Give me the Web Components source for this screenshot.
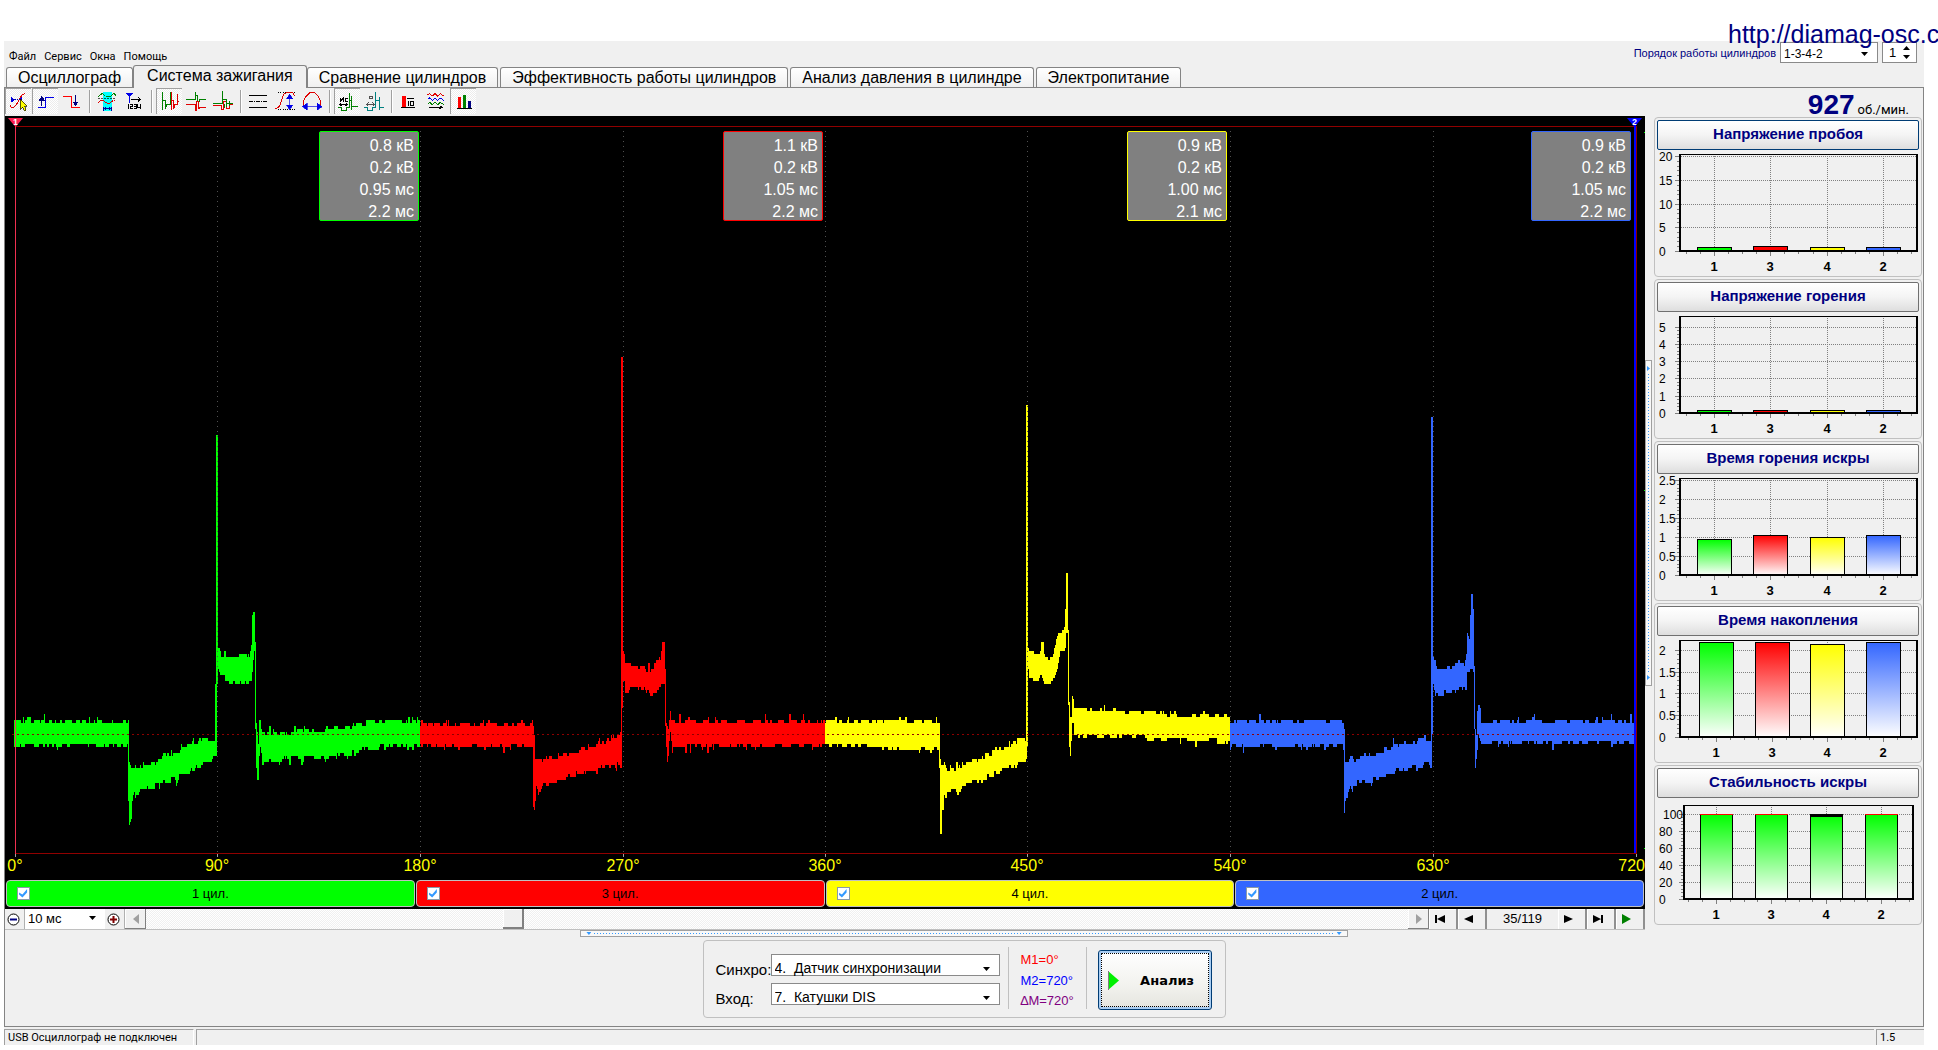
<!DOCTYPE html>
<html lang="ru">
<head>
<meta charset="utf-8">
<title>Diamag</title>
<style>
body{margin:0;background:#fff;font-family:"Liberation Sans",Arial,sans-serif;overflow:hidden}
</style>
</head>
<body>
<osc-app></osc-app>
<script>
const define = (name, css, html, ready) => {
  const tpl = document.createElement('template');
  customElements.define(name, class extends HTMLElement {
    connectedCallback() {
      if (this.shadowRoot) return;
      tpl.innerHTML = `<style>:host,*{box-sizing:border-box}${css}</style>` + (typeof html === 'function' ? html(this) : html);
      this.attachShadow({mode: 'open'}).append(tpl.content.cloneNode(true));
      if (ready) ready(this);
    }
  });
};

/* drop-down list */
define('pick-list', `
  :host{display:grid;grid-template:1fr/1fr;align-items:center;background:#fff;border:1px solid #8a8a8a;font-size:13px}
  select{grid-area:1/1;appearance:none;border:0;background:none;font:inherit;color:#000;padding:0 3px 2px;margin:0;width:100%;height:100%;outline:0}
  svg{grid-area:1/1;justify-self:end;margin:0 9px 2px 0;pointer-events:none}`,
  el => `<select aria-label="${el.getAttribute('label')}"><option>${el.getAttribute('value')}</option></select>
  <svg width="7" height="4"><path d="M0 0H7L3.5 4Z"/></svg>`);

/* menu line with the firing order controls */
define('menu-bar', `
  :host{display:flex;height:24px;justify-content:space-between}
  nav{display:flex;gap:8px;padding:8px 0 0 5px;font:11px/14px Roboto,sans-serif}
  nav button{all:unset}
  .order{display:flex;align-items:flex-start;gap:4px;padding:1px 7px 0 0;font:11px/22px "Liberation Sans",sans-serif;color:#000080}
  pick-list{width:98px;height:21px;font-size:12px}
  .spin{display:flex;align-items:center;width:35px;height:21px;background:#fff;border:1px solid #8a8a8a;padding-right:6px}
  input{all:unset;flex:1;min-width:0;padding-left:6px;font:13px "Liberation Sans",sans-serif;color:#000}`,
  `<nav><button>Файл</button><button>Сервис</button><button>Окна</button><button>Помощь</button></nav>
  <div class="order"><label for="o">Порядок работы цилиндров</label>
  <pick-list id="o" label="Порядок работы цилиндров" value="1-3-4-2"></pick-list>
  <span class="spin"><input aria-label="Первый цилиндр" value="1"><svg width="7" height="13"><path d="M0 4H7L3.5 0ZM0 9H7L3.5 13Z"/></svg></span></div>`);

define('tab-strip', `
  :host{display:flex;align-items:flex-end;gap:2px;height:23px;padding-left:2px;border-bottom:1px solid #848484}
  button{font:16px/18px "Liberation Sans",sans-serif;margin:0;padding:1px 11px 0;height:20px;border:1px solid #848484;border-bottom:0;border-radius:3px 3px 0 0;background:linear-gradient(#fff,#f0f0f0);color:#000;white-space:nowrap}
  button.on{height:23px;padding:0 13px 3px;margin:0 -2px -1px;background:#f0f0f0}`,
  `<button>Осциллограф</button><button class="on">Система зажигания</button><button>Сравнение цилиндров</button><button>Эффективность работы цилиндров</button><button>Анализ давления в цилиндре</button><button>Электропитание</button>`);

/* Icon sheet: every glyph is drawn on one long strip, three units to the pixel. */
const icons = {
 15: ['Маркеры', 1, `<g fill="none" stroke="#e00000" stroke-width="3"><path d="M30 225l3 6h9l6-6 6-9 6-12 6-9 9-4"/></g><path d="M33 200v18l12-9zM66 200v18l-9-9z" fill="#0000e8"/><path d="M33 209h33" stroke="#0000a0" stroke-width="3" stroke-dasharray="3 3"/><path d="M61 208v30l7-6 6 12 5-3-5-12h8z" fill="#ff0" stroke="#000" stroke-width="2"/>`],
 96: ['Фронт', 1, `<path d="M114 233h21v-32h27" fill="none" stroke="#0000e8" stroke-width="3"/><path d="M125 205v24M118 212h15l-7.500-12z" stroke="#000080" fill="#000080" stroke-width="3"/>`],
 177: ['Спад', 0, `<path d="M189 198h26v34h24" fill="none" stroke="#f00" stroke-width="3"/><path d="M226 196v24M219 216h15l-7.500 10z" stroke="#000080" fill="#000080" stroke-width="3"/>`],
 282: ['Окно', 0, `<path d="M308 186h27v57h-27z" fill="#0ff"/><g fill="none" stroke-width="3" stroke-dasharray="8 1"><path d="M294 200l12-9 15 9h9l12-9 6 6" stroke="#008000"/><path d="M294 218l12-8 15 9h9l12-9 6 6" stroke="#e00000"/></g><path d="M294 204h54" stroke="#000" stroke-width="2" stroke-dasharray="5 4"/><path d="M311 236h21M309 230v12M334 230v12M315 232v8M328 232v8" stroke="#0000a0" stroke-width="3"/>`],
 363: ['Отсчёты', 0, `<path d="M378 189h21l-10 12z" fill="#0000e8"/><path d="M388 195v24" stroke="#0000e8" stroke-width="3"/><path d="M393 208h27M414 202l7 6-7 6" stroke="#000" stroke-width="3" fill="none"/><path d="M385.500 222v15M390 223.500h6v6h-4.500v6h6M402 223.500h6v12h-7M402 229.500h6M412.500 222v9h9M421.500 222v15" stroke="#000" stroke-width="3" fill="none"/>`],
 468: ['Последовательно', 1, `<path d="M486 186v54M486 210h9v27l6-15h9v-36" fill="none" stroke="#008000" stroke-width="3"/><path d="M515 186v54M515 210h6v27l4-15h6v-30 27l6-5" fill="none" stroke="#e00000" stroke-width="3"/>`],
 549: ['Раздельно', 0, `<path d="M558 209h27v-24 12h6v18h6v-6h20" fill="none" stroke="#008000" stroke-width="3"/><path d="M558 224h27v18M588 242v-27h6v21h3v-4h20" fill="none" stroke="#e00000" stroke-width="3"/>`],
 630: ['Наложение', 0, `<path d="M640 225h24v12h6v-24h9v21h9v-12h12" fill="none" stroke="#e00000" stroke-width="3"/><path d="M640 221h26v-38 24h14v12h20M680 207v24M673 221v12M688 214v14" fill="none" stroke="#008000" stroke-width="3"/>`],
 735: ['Линии', 0, `<path d="M747 197h54M747 233h54" stroke="#000" stroke-width="3"/><path d="M747 215h54" stroke="#000" stroke-width="3" stroke-dasharray="5 2"/>`],
 816: ['Амплитуда', 0, `<path d="M834 187h51M834 238h51" stroke="#000" stroke-width="3" stroke-dasharray="3 4"/><path d="M826 236l9-3 6-9 6-21 6-12 9-4h15l8 12" stroke="#e00000" stroke-width="3" fill="none"/><path d="M869 199v30M860 206h18l-9-14zM860 225h18l-9 14z" stroke="#0000e8" fill="#0000e8" stroke-width="2"/>`],
 897: ['Длительность', 0, `<path d="M910 228v-15l6-12 12-12 8-2 9 2 11 12 6 12v15" stroke="#e00000" stroke-width="3" fill="none"/><path d="M916 230h42M921 220v20l-14-10zM952 220v20l14-10z" stroke="#0000e8" fill="#0000e8" stroke-width="2"/>`],
 1002: ['Шкала мс', 1, `<path d="M1015 231h9v9h15v-9h9v-42M1054 197v42M1048 210h6M1054 228h20" stroke="#008000" stroke-width="3" fill="none"/><path d="M1020 216v-11l4 6 5-6v11M1043 206h-7v9h7M1020 223h20M1024 218l-5 5 5 5M1037 218l5 5-5 5" stroke="#000" stroke-width="3" fill="none"/>`],
 1083: ['Шкала градусов', 0, `<path d="M1093 231h9v9h15v-9h9v-45M1138 200v39M1129 210h9M1138 232h14" stroke="#008080" stroke-width="3" fill="none"/><path d="M1109 198h7v8h-7zM1102 223h20M1106 217l-6 6 6 6M1118 217l5 6-5 6" stroke="#000" stroke-width="2" fill="none"/>`],
 1188: ['Гистограмма', 0, `<path d="M1205 198h14v33h-14z" fill="#f00"/><path d="M1203 233h42M1220 206h23" stroke="#000" stroke-width="3"/><path d="M1224 213v15M1231 214h9v13h-9z" stroke="#000" stroke-width="3" fill="none"/>`],
 1270: ['Эквалайзер', 0, `<g fill="none" stroke-width="3"><path d="M1284 195l6-4 8 7 8-7 8 7 8-7 10 7" stroke="#e00000"/><path d="M1284 208l6-4 8 7 8-7 8 7 8-7 10 7" stroke="#0000e8"/><path d="M1284 221l6-4 8 7 8-7 8 7 8-7 10 7" stroke="#008000"/><path d="M1287 232h40M1320 227l7 5-7 5" stroke="#000"/></g>`],
 1351: ['Столбцы', 1, `<path d="M1374 201h9v33h-9z" fill="#f00"/><path d="M1389 195h9v39h-9z" fill="#008000"/><path d="M1404 213h9v21h-9z" fill="#000080"/><path d="M1371 235h45" stroke="#000" stroke-width="3"/>`]
};
define('tool-bar', `
  :host{display:flex;height:28px}
  button{all:unset;width:27px;height:28px}
  button.on{width:25px;height:25px;border:solid #a0a0a0;border-width:1px 0 0 1px;margin:0 1px 2px 0;background:repeating-conic-gradient(#fff 0 25%,#ececec 0 50%) 0 0/2px 2px}
  button.on svg{margin:-1px 0 0 -1px}
  svg{display:block}
  i{width:2px;margin:2px 3px 3px;background:linear-gradient(90deg,#a0a0a0 50%,#fff 50%)}`,
  () => { let h = '', prev = 15; for (const k in icons) { const [t, on, g] = icons[k]; if (k - prev > 90) h += '<i></i>';
    h += `<button title="${t}" aria-label="${t}"${on ? ' class="on"' : ''}><svg width="27" height="28" viewBox="${k} 174 81 84" shape-rendering="crispEdges">${g}</svg></button>`; prev = +k; } return h; });

/* Envelopes of the four cylinders: [x, top, bottom]; "n" marks a noisy stretch up to the next key. */
const waves = [
 ['#00ff00', [[14,724,744,'n'],[128,724,744],[128,720,801],[129,762,824],[131,767,819],[132,767,800],[133,769,795],[134,769,792,'n'],[150,767,786,'n'],[167,757,780,'n'],[183,750,773,'n'],[200,742,764,'n'],[214,740,756],[215,684,755],[216,436,755],[217,436,684],[218,647,668],[220,650,675],[221,658,675,'n'],[230,658,679,'n'],[249,658,681],[251,645,681],[252,616,671],[253,613,660],[254,613,652],[255,642,730],[256,723,768],[257,732,780],[258,745,780],[259,721,755],[260,720,748],[262,735,758,'n'],[300,733,757,'n'],[330,730,754,'n'],[350,728,752,'n'],[370,724,746,'n'],[420,723,743]]],
 ['#ff0000', [[420,725,744,'n'],[533,725,745],[533,725,806],[534,735,811],[535,759,801],[536,759,785],[538,759,795],[541,760,790],[543,761,784,'n'],[552,759,780,'n'],[570,754,774,'n'],[590,748,768,'n'],[610,741,765,'n'],[617,736,763],[620,733,767],[621,356,767],[622,356,707],[623,652,681],[624,655,682],[625,666,690,'n'],[640,670,685,'n'],[650,671,693,'n'],[656,664,689,'n'],[660,660,686],[662,642,684],[664,642,684],[665,670,725],[666,723,748],[667,725,762],[668,730,756],[669,720,740],[670,710,733],[671,721,742],[672,723,743,'n'],[750,723,743,'n'],[825,722,743]]],
 ['#ffff00', [[825,724,745,'n'],[939,724,746],[939,725,768],[940,759,834],[941,765,835],[942,765,810],[943,765,810],[944,763,795],[946,768,798],[948,772,788,'n'],[960,769,788,'n'],[970,764,782,'n'],[990,755,774,'n'],[1005,749,768,'n'],[1015,743,764,'n'],[1025,740,762],[1026,405,759],[1027,405,748],[1028,647,668],[1029,652,678],[1038,653,682],[1040,652,675],[1041,642,675],[1043,642,680],[1044,655,685],[1048,659,685],[1052,657,681],[1055,645,675],[1057,635,668],[1060,633,652],[1064,628,652],[1065,608,647],[1066,574,632],[1067,574,632],[1068,630,704],[1069,703,748],[1070,717,756],[1071,717,741],[1072,697,723],[1073,699,723],[1074,712,735,'n'],[1120,712,734,'n'],[1150,715,737,'n'],[1230,718,740]]],
 ['#3366ff', [[1230,723,744,'n'],[1342,723,744],[1343,723,750],[1344,730,814],[1345,762,801],[1347,763,797],[1350,757,786],[1352,757,791],[1354,763,782,'n'],[1370,757,779,'n'],[1392,748,770,'n'],[1410,744,767,'n'],[1428,740,762],[1430,740,767],[1431,418,767],[1432,418,735],[1433,658,683],[1435,660,695],[1437,672,693,'n'],[1445,671,691,'n'],[1456,667,688,'n'],[1464,665,688],[1466,655,690],[1467,634,671],[1469,638,671],[1470,616,668],[1471,595,668],[1472,595,668],[1473,608,673],[1474,665,730],[1475,729,767],[1476,735,758],[1477,712,750],[1478,704,735],[1480,707,741],[1481,722,742,'n'],[1560,722,742,'n'],[1634,722,742]]]
];
function wavePath(keys) {
  let seed = keys[0][0] * 7919 + 13, d = '', up = 0, dn = 0, hu = 0, hd = 0;
  const rnd = () => (seed = (seed * 1103515245 + 12345) % 2147483648) / 2147483648;
  const pick = () => { const r = rnd(); return r < .4 ? 0 : r < .9 ? 3 : r < .98 ? 6 : 9; };
  for (let k = 0; k < keys.length - 1; k++) {
    const [x0, a0, b0, n] = keys[k], [x1, a1, b1] = keys[k + 1];
    for (let x = x0; x < Math.max(x1, x0 + 1); x++) {
      const f = x1 > x0 ? (x - x0) / (x1 - x0) : 0;
      if (hu-- <= 0) { up = pick(); hu = rnd() * (up > 3 ? 2 : 4) | 0; }
      if (hd-- <= 0) { dn = pick(); hd = rnd() * (dn > 3 ? 2 : 4) | 0; }
      const t = Math.round((a0 + (a1 - a0) * f) / 3) * 3 - (n ? up : 0), b = Math.round((b0 + (b1 - b0) * f) / 3) * 3 + (n ? dn : 0);
      d += `M${x + .5} ${t}V${b}`;
    }
  }
  return d;
}
define('readout-box', `
  :host{display:block;width:100px;height:90px;padding:3px 4px 0 0;background:#808080;border:1px solid var(--c);border-radius:2px;color:#fff;font:16px/22px "Liberation Sans",sans-serif;text-align:right}`,
  el => el.getAttribute('values').split('|').map(v => `<div>${v}</div>`).join(''));

const pct = x => (x - 5) / 16.4 + '%';
define('scope-view', `
  :host{display:block;position:relative;flex:1;min-height:0;background:#000;overflow:hidden}
  svg.plot{display:block;width:100%;height:100%}
  readout-box,.deg,.flag{position:absolute}
  readout-box{top:15px;transform:translateX(-100%)}
  .deg{bottom:4px;transform:translateX(-50%);color:#ff0;font-size:16px;line-height:20px}
  .deg.end{right:0;transform:none}
  .flag{top:2px;margin-left:-7px;width:15px;height:9px;clip-path:polygon(0 0,100% 0,50% 100%);color:#fff;font:bold 9px/8px "Liberation Sans",sans-serif;text-align:center}`,
  `<svg class="plot" viewBox="5 116 1640 764" preserveAspectRatio="none" shape-rendering="crispEdges">
   <g fill="none">
   <path stroke="#505050" stroke-dasharray="1 4" d="M217.500 131V853M420.500 131V853M623.500 131V853M825.500 131V853M1027.500 131V853M1230.500 131V853M1433.500 131V853"/>
   <path stroke="#900000" d="M15 126.500H1637M15 853.500H1637M1636.500 126V853"/>
   ${waves.map(([c, k]) => `<path stroke="${c}" d="${wavePath(k)}"/>`).join('')}
   <path stroke="#505050" stroke-dasharray="1 4" d="M217.500 431V694M1027.500 401V750"/>
   <path stroke="#900000" stroke-dasharray="2 3" d="M12 734.500H1634"/>
   <path stroke="#f03050" d="M15.500 124V855"/><path stroke="#0000ff" stroke-width="2" d="M1635 124V853"/>
   <path stroke="#a0a0a0" d="M15.500 854v3M217.500 854v3M420.500 854v3M623.500 854v3M825.500 854v3M1027.500 854v3M1230.500 854v3M1433.500 854v3M1636.500 854v3"/>
   <path stroke="#00ff00" d="M1644 132.500h1M1644 490.500h1M1644 848.500h1"/>
   </g></svg>
   <span class="flag" style="left:${pct(15)};background:#ff2050">1</span><span class="flag" style="left:${pct(1634)};background:#0000ff">2</span>
   ${[['#0f0',419,'0.8 кВ|0.2 кВ|0.95 мс|2.2 мс'],['#f00',823,'1.1 кВ|0.2 кВ|1.05 мс|2.2 мс'],['#ff0',1227,'0.9 кВ|0.2 кВ|1.00 мс|2.1 мс'],['#36f',1631,'0.9 кВ|0.2 кВ|1.05 мс|2.2 мс']].map(([c,x,v]) => `<readout-box style="--c:${c};left:${pct(x)}" values="${v}"></readout-box>`).join('')}
   ${[15,217,420,623,825,1027,1230,1433].map((x, i) => `<span class="deg" style="left:${pct(x)}">${i * 90}°</span>`).join('')}<span class="deg end">720</span>`);

define('channel-bar', `
  :host{display:flex;gap:1px;height:29px;padding:0 1px 2px;background:#000}
  label{flex:1;display:grid;grid-template-columns:13px 1fr 13px;align-items:center;padding:0 10px;border:1px solid #c0c0c0;border-radius:4px;font-size:13px;text-align:center;color:#000}
  input{appearance:none;display:block;margin:0;width:13px;height:13px;background:#fff;border:1px solid #8a9aa8}
  input::before{content:"";display:block;width:9px;height:9px;margin:1px;background:#3399ff;clip-path:polygon(0 40%,38% 62%,90% 0,90% 38%,38% 95%,0 62%)}`,
  [['#0f0','1 цил.'],['#f00','3 цил.'],['#ff0','4 цил.'],['#36f','2 цил.']].map(([c,t]) => `<label style="background:${c}"><input type="checkbox" checked><span>${t}</span></label>`).join(''));

define('time-bar', `
  :host{display:flex;height:21px;border-bottom:1px solid #c0c0c0;font-size:13px}
  button{all:unset;display:grid;place-items:center;width:21px;background:#f0f0f0;box-shadow:inset -1px -1px #808080,inset 1px 1px #fff;flex:none}
  button.w{width:29px;box-shadow:inset -2px 0 #909090,inset 1px 1px #fff}
  button.w svg{margin-right:8px}
  button.z{width:20px;box-shadow:inset -1px 0 #b0b0b0}
  button.z svg{margin-right:4px}
  pick-list{width:80px;border:0;flex:none}
  input{appearance:none;flex:1;min-width:0;margin:0;height:20px;background:repeating-conic-gradient(#fff 0 25%,#f0f0f0 0 50%) 0 0/2px 2px}
  input::-webkit-slider-thumb{appearance:none;width:21px;height:20px;background:#f0f0f0;box-shadow:inset -2px -2px #808080,inset 1px 1px #fff}
  .pos{width:71px;text-align:center;line-height:20px}`,
  `<button class="z" aria-label="Уменьшить"><svg width="13" height="13"><circle cx="6.500" cy="6.500" r="5.500" fill="#fff" stroke="#000"/><path d="M3 6.500h7" stroke="#000080" stroke-width="2"/></svg></button>
  <pick-list label="Развёртка" value="10 мс"></pick-list>
  <button class="z" aria-label="Увеличить"><svg width="13" height="13"><circle cx="6.500" cy="6.500" r="5.500" fill="#fff" stroke="#000"/><path d="M3 6.500h7M6.500 3v7" stroke="#800000" stroke-width="2"/></svg></button>
  <button aria-label="Влево"><svg width="6" height="10"><path d="M6 0V10L0 5Z" fill="#a0a0a0"/></svg></button>
  <input type="range" aria-label="Прокрутка" min="0" max="1000" value="288">
  <button aria-label="Вправо"><svg width="6" height="10"><path d="M0 0V10L6 5Z" fill="#a0a0a0"/></svg></button>
  <button class="w" aria-label="В начало"><svg width="10" height="8"><path d="M0 0h2v8h-2zM10 0V8L2 4Z"/></svg></button>
  <button class="w" aria-label="Назад"><svg width="9" height="8"><path d="M9 0V8L0 4Z"/></svg></button>
  <span class="pos">35/119</span>
  <button class="w" aria-label="Вперёд"><svg width="9" height="8"><path d="M0 0V8L9 4Z"/></svg></button>
  <button class="w" aria-label="В конец"><svg width="10" height="8"><path d="M8 0h2v8h-2zM0 0V8L8 4Z"/></svg></button>
  <button class="w" aria-label="Пуск"><svg width="9" height="10"><path d="M0 0V10L9 5Z" fill="#008000"/></svg></button>`);

/* splitter grip with dots and an arrow at each end */
define('split-grip', `
  :host{display:flex;align-items:center;border:1px solid #a0a0a0;background:#f8f8f8;padding:0 5px;gap:3px;height:7px}
  :host([vertical]){flex-direction:column;width:7px;height:auto;padding:5px 0}
  i{flex:1;height:1px;background:repeating-linear-gradient(90deg,#3399ff 0 1px,transparent 1px 3px)}
  :host([vertical]) i{width:1px;background:repeating-linear-gradient(#3399ff 0 1px,transparent 1px 3px)}
  b{width:5px;height:3px;background:#3399ff;clip-path:polygon(0 0,100% 0,50% 100%)}
  :host([vertical]) b{width:3px;height:5px;clip-path:polygon(0 0,100% 50%,0 100%)}`, '<b></b><i></i><b></b>');

/* small bar chart under a title button */
define('bar-chart', `
  :host{display:block;height:160px;border:1px solid #c0c0c0;border-radius:4px;padding:2px 2px 0}
  button{display:block;width:100%;height:30px;margin:0;padding:0 0 4px;border:1px solid #707070;border-radius:2px;background:linear-gradient(#fff,#f4f4f4 50%,#dedede);color:#000080;font:bold 15px "Liberation Sans",sans-serif}
  :host([active]) button{border-color:#003c74}
  svg{display:block;margin-left:-2px}
  text{font:12px "Liberation Sans",sans-serif}
  .n{font-weight:bold;font-size:13px;text-anchor:middle}`,
  el => {
    const at = n => JSON.parse(el.getAttribute(n));
    const [l, t, r] = at('frame'), rows = at('rows'), bars = at('bars'), w = at('width'), stab = el.hasAttribute('stability');
    const cols = stab ? ['#0f0', '#0f0', '#0f0', '#0f0'] : ['#0f0', '#f00', '#ff0', '#36f'];
    let grid = '', tick = '', txt = '', bar = '', defs = '';
    rows.forEach(([v, y], i) => { if (i < rows.length - 1) grid += `M${l + 2} ${y + .5}H${r}`; tick += `M${l - 4} ${y + .5}h4`;
      txt += `<text x="${v == 100 ? 8 : 4}" y="${y + 5}">${v}</text>`;
      if (i) for (let k = 1; k < 5; k++) tick += `M${l - 2} ${Math.round(y + (rows[i - 1][1] - y) * k / 5) + .5}h2`; });
    bars.forEach(([x, y], i) => { const c = x + (w >> 1);
      grid += `M${c + .5} ${t}V101`; tick += `M${c + .5} 102v4`; for (let k = -1; k < 3; k++) if (k) tick += `M${c + k * 14 + .5} 102v2`;
      if (!i) tick += `M${c - 27.5} 102v2`;
      defs += `<linearGradient id="${i}" x2="0" y2="1"><stop stop-color="${cols[i]}"/><stop offset="1" stop-color="#fff"/></linearGradient>`;
      bar += `<rect x="${x + .5}" y="${y + .5}" width="${w - 1}" height="${101 - y}" fill="${y > 93 ? cols[i] : `url(#${i})`}" stroke="#000"/>`;
      if (stab) bar += i == 2 ? `<path d="M${x} ${y}h${w}v3h-${w}z"/>` : `<path d="M${x} ${y + .5}h${w}" stroke="#f00"/>`;
      txt += `<text class="n" x="${c}" y="121">${[1, 3, 4, 2][i]}</text>`; });
    return `<button>${el.getAttribute('name')}</button><svg width="266" height="125" shape-rendering="crispEdges"><defs>${defs}</defs>
    <path d="${grid}" stroke="#808080" stroke-dasharray="1 1" fill="none"/><path d="${tick}" stroke="#808080" fill="none"/>${bar}
    <path d="M${l} ${t + .5}H${r + 2}" stroke="#000"/><path d="M${l + 1} ${t}V101H${r + 1}V${t}" stroke="#000" stroke-width="2" fill="none"/>${txt}</svg>`;
  });

define('side-panel', `
  :host{display:flex;flex-direction:column;width:268px;flex:none;gap:2px;margin-right:1px}
  .rpm{display:flex;justify-content:flex-end;align-items:baseline;gap:3px;height:27px;padding-right:13px;font:13px/27px Roboto,sans-serif}
  b{font:bold 28px/34px "Liberation Sans",sans-serif;color:#000080}`,
  `<div class="rpm"><b>927</b><span>об./мин.</span></div>
  <bar-chart active name="Напряжение пробоя" frame="[24,4,261]" width="35" rows="[[20,6],[15,30],[10,54],[5,77],[0,101]]" bars="[[42,97],[98,96],[155,97],[211,97]]"></bar-chart>
  <bar-chart name="Напряжение горения" frame="[24,4,261]" width="35" rows="[[5,15],[4,32],[3,49],[2,66],[1,84],[0,101]]" bars="[[42,98],[98,98],[155,98],[211,98]]"></bar-chart>
  <bar-chart name="Время горения искры" frame="[24,4,261]" width="35" rows="[[2.5,6],[2,25],[1.5,44],[1,63],[0.5,82],[0,101]]" bars="[[42,65],[98,61],[155,63],[211,61]]"></bar-chart>
  <bar-chart name="Время накопления" frame="[24,4,261]" width="35" rows="[[2,14],[1.5,36],[1,57],[0.5,79],[0,101]]" bars="[[44,6],[100,6],[155,8],[211,6]]"></bar-chart>
  <bar-chart stability name="Стабильность искры" frame="[28,7,257]" width="33" rows="[[100,16],[80,33],[60,50],[40,67],[20,84],[0,101]]" bars="[[45,16],[100,16],[155,16],[210,16]]"></bar-chart>`);

define('sync-panel', `
  :host{display:flex;width:523px;height:78px;border:1px solid #c0c0c0;border-radius:4px;padding:6px 13px 8px 12px}
  .in{display:grid;grid-template-columns:55px 229px;grid-template-rows:22px 22px;row-gap:7px;padding-top:7px;font-size:15px;line-height:27px;white-space:nowrap}
  .in label{height:22px;padding-top:2px}
  pick-list{font-size:14px}
  .m{display:flex;flex-direction:column;justify-content:space-between;width:80px;margin-left:8px;padding:4px 0 0 12px;border:solid #c0c0c0;border-width:0 1px;font-size:13px;line-height:17px}
  button{display:flex;align-items:center;width:114px;height:60px;margin:3px 0 0 11px;padding:0 0 0 9px;gap:21px;border:1px solid #003c74;border-radius:3px;background:linear-gradient(#fff,#f2f2ee 60%,#e4e4de);box-shadow:inset 0 0 0 2px #a9cdf2;font:bold 13px "DejaVu Sans",sans-serif;outline:1px dotted #000;outline-offset:-4px}`,
  `<div class="in"><label for="a">Синхро:</label><pick-list id="a" label="Синхро:" value="4.&nbsp; Датчик синхронизации"></pick-list>
  <label for="b">Вход:</label><pick-list id="b" label="Вход:" value="7.&nbsp; Катушки DIS"></pick-list></div>
  <div class="m"><span style="color:#f00">M1=0°</span><span style="color:#00f">M2=720°</span><span style="color:#800080">∆M=720°</span></div>
  <button><svg width="11" height="19"><path d="M0 0V19L11 9.500Z" fill="#00f000"/><path d="M.5 0V19" stroke="#808080"/></svg>Анализ</button>`);

define('status-bar', `
  :host{display:grid;grid-template-columns:190px 1fr 48px;gap:2px;height:18px;padding-top:2px;font:11px/15px Roboto,sans-serif}
  div{border:solid #a0a0a0;border-width:1px 0 0 1px;padding-left:3px}
  div:nth-child(-n+2){border-right:1px solid #fff}`, '<div>USB Осциллограф не подключен</div><div></div><div>1.5</div>');

define('osc-app', `
  :host{display:flex;flex-direction:column;height:calc(100vh - 5px);padding-top:41px}
  .win{flex:1;display:flex;flex-direction:column;margin:0 14px 0 4px;background:#f0f0f0;min-height:0}
  .page{flex:1;display:flex;flex-direction:column;border:solid #848484;border-width:0 1px 1px;min-height:0}
  .top{flex:1;display:flex;min-height:0}
  .left{flex:1;display:flex;flex-direction:column;min-width:0}
  .grip{display:flex;width:9px;flex:none;padding:272px 0 244px}
  .bottom{display:flex;flex-direction:column;align-items:center;height:96px;gap:3px}
  split-grip.h{width:40%}
  a{position:absolute;top:18px;left:1728px;right:0;overflow:hidden;white-space:nowrap;font-size:25px;line-height:32px;color:#000080;text-decoration:none}`,
  `<div class="win"><menu-bar></menu-bar><tab-strip></tab-strip>
  <div class="page"><div class="top"><div class="left"><tool-bar></tool-bar><scope-view></scope-view><channel-bar></channel-bar><time-bar></time-bar></div>
  <div class="grip"><split-grip vertical></split-grip></div><side-panel></side-panel></div>
  <div class="bottom"><split-grip class="h"></split-grip><sync-panel></sync-panel></div></div>
  <status-bar></status-bar></div>
  <a href="#">http://diamag-osc.c</a>`);
</script>
</body>
</html>
